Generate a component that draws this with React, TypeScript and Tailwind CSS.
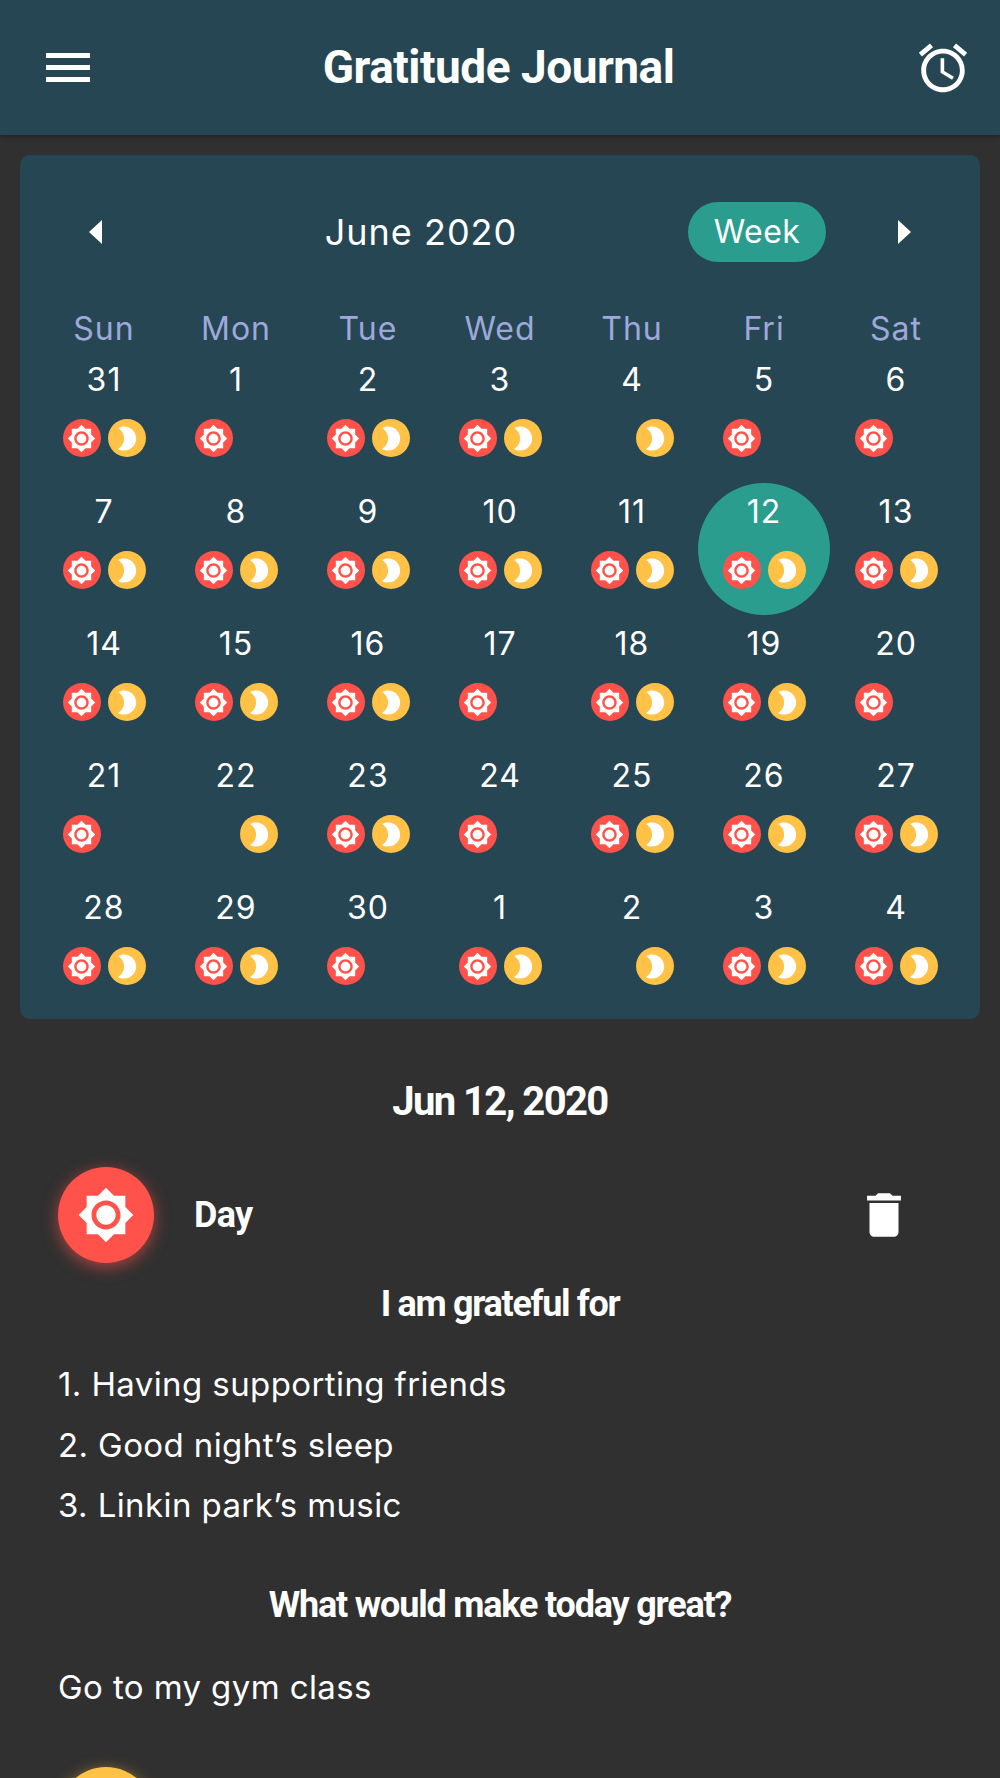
import React from 'react'

// ─── Icons ───────────────────────────────────────────────────

function SunIcon({ className }: { className: string }) {
  return (
    <svg viewBox="0 0 24 24" fill="#fff" className={className}>
      <path d="M20 8.69V4h-4.69L12 .69 8.69 4H4v4.69L.69 12 4 15.31V20h4.69L12 23.31 15.31 20H20v-4.69L23.31 12 20 8.69zM12 18c-3.31 0-6-2.69-6-6s2.69-6 6-6 6 2.69 6 6-2.69 6-6 6zm0-10c-2.21 0-4 1.79-4 4s1.79 4 4 4 4-1.79 4-4-1.79-4-4-4z" />
    </svg>
  )
}

function MoonIcon({ className }: { className: string }) {
  return (
    <svg viewBox="0 0 24 24" fill="#fff" className={className}>
      <path d="M10 2c-1.82 0-3.53.5-5 1.35C7.99 5.08 10 8.3 10 12s-2.01 6.92-5 8.65C6.47 21.5 8.18 22 10 22c5.52 0 10-4.48 10-10S15.52 2 10 2z" />
    </svg>
  )
}

function AlarmIcon() {
  return (
    <svg viewBox="0 0 24 24" fill="#fff" className="w-[58px] h-[58px]">
      <path d="M22 5.72l-4.6-3.86-1.29 1.53 4.6 3.86L22 5.72zM7.88 3.39L6.6 1.86 2 5.71l1.29 1.53 4.59-3.85zM12.5 8H11v6l4.75 2.85.75-1.23-4-2.37V8zM12 4c-4.97 0-9 4.03-9 9s4.02 9 9 9c4.97 0 9-4.03 9-9s-4.03-9-9-9zm0 16c-3.87 0-7-3.13-7-7s3.13-7 7-7 7 3.13 7 7-3.13 7-7 7z" />
    </svg>
  )
}

function TrashIcon() {
  return (
    <svg viewBox="0 0 24 24" fill="#fff" className="w-[58px] h-[58px]">
      <path d="M6 19c0 1.1.9 2 2 2h8c1.1 0 2-.9 2-2V7H6v12zM19 4h-3.5l-1-1h-5l-1 1H5v2h14V4z" />
    </svg>
  )
}

// ─── Calendar data ───────────────────────────────────────────

const WEEKDAYS = ['Sun', 'Mon', 'Tue', 'Wed', 'Thu', 'Fri', 'Sat']

// b = day + night, d = day only, n = night only
const DAYS: [string, 'b' | 'd' | 'n'][] = [
  ['31', 'b'], ['1', 'd'], ['2', 'b'], ['3', 'b'], ['4', 'n'], ['5', 'd'], ['6', 'd'],
  ['7', 'b'], ['8', 'b'], ['9', 'b'], ['10', 'b'], ['11', 'b'], ['12', 'b'], ['13', 'b'],
  ['14', 'b'], ['15', 'b'], ['16', 'b'], ['17', 'd'], ['18', 'b'], ['19', 'b'], ['20', 'd'],
  ['21', 'd'], ['22', 'n'], ['23', 'b'], ['24', 'd'], ['25', 'b'], ['26', 'b'], ['27', 'b'],
  ['28', 'b'], ['29', 'b'], ['30', 'd'], ['1', 'b'], ['2', 'n'], ['3', 'b'], ['4', 'b'],
]

function DayCell({ label, kind, selected }: { label: string; kind: 'b' | 'd' | 'n'; selected: boolean }) {
  return (
    <div className={`h-[132px] flex flex-col items-center pt-[7px] rounded-full ${selected ? 'bg-[#2a9d8f]' : ''}`}>
      <div className="text-[32px] leading-[44px] tracking-[1px] text-white">{label}</div>
      <div className="flex gap-[7px] mt-[17px]">
        <div className={`w-[38px] h-[38px] rounded-full flex items-center justify-center ${kind === 'n' ? '' : 'bg-[#ff524b]'}`}>
          {kind !== 'n' && <SunIcon className="w-[29px] h-[29px]" />}
        </div>
        <div className={`w-[38px] h-[38px] rounded-full flex items-center justify-center ${kind === 'd' ? '' : 'bg-[#ffc247]'}`}>
          {kind !== 'd' && <MoonIcon className="w-[29px] h-[29px]" />}
        </div>
      </div>
    </div>
  )
}

// ─── Main page ───────────────────────────────────────────────

export default function App() {
  return (
    <div className="h-[1778px] overflow-hidden bg-[#303030] text-white font-['Inter',sans-serif]">
      <header className="h-[135px] bg-[#264653] flex items-center justify-between pl-[46px] pr-[28px] shadow-[0_2px_4px_rgba(0,0,0,0.3)]">
        <div className="w-[44px] flex flex-col gap-[7px]">
          <div className="h-[5px] bg-white" />
          <div className="h-[5px] bg-white" />
          <div className="h-[5px] bg-white" />
        </div>
        <h1 className="mr-[7px] font-['Roboto',sans-serif] font-bold text-[46px] tracking-[-0.5px]">Gratitude Journal</h1>
        <AlarmIcon />
      </header>

      <section className="mx-[20px] mt-[20px] h-[864px] rounded-[10px] bg-[#264653] px-[18px] pt-[47px]">
        <div className="flex items-center h-[60px] pl-[51px]">
          <svg viewBox="0 0 13 24" className="w-[13px] h-[24px]" fill="#fff"><polygon points="13,0 0,12 13,24" /></svg>
          <div className="w-[200px] ml-[219px] text-center text-[36px] tracking-[1px]">June 2020</div>
          <div className="ml-[167px] w-[138px] h-[60px] rounded-full bg-[#2a9d8f] flex items-center justify-center text-[32px] tracking-[0.4px]">Week</div>
          <svg viewBox="0 0 13 24" className="ml-[72px] w-[13px] h-[24px]" fill="#fff"><polygon points="0,0 13,12 0,24" /></svg>
        </div>

        <div className="grid grid-cols-7 mt-[45px]">
          {WEEKDAYS.map(d => (
            <div key={d} className="text-center text-[32px] leading-[44px] tracking-[1px] text-[#9fa8da]">{d}</div>
          ))}
        </div>
        <div className="grid grid-cols-7">
          {DAYS.map(([label, kind], i) => (
            <DayCell key={i} label={label} kind={kind} selected={i === 12} />
          ))}
        </div>
      </section>

      <h2 className="mt-[58px] text-center font-['Roboto',sans-serif] font-bold text-[40px] tracking-[-1.6px] leading-[50px]">Jun 12, 2020</h2>

      <div className="mt-[40px] px-[58px] flex items-center">
        <div className="w-[96px] h-[96px] rounded-full bg-[#ff524b] flex items-center justify-center shadow-[0_4px_16px_rgba(255,82,75,0.6)]">
          <SunIcon className="w-[58px] h-[58px]" />
        </div>
        <div className="ml-[40px] font-['Roboto',sans-serif] font-bold text-[36px] tracking-[-0.7px]">Day</div>
        <div className="ml-auto mr-[29px]"><TrashIcon /></div>
      </div>

      <h3 className="mt-[17px] text-center font-['Roboto',sans-serif] font-bold text-[36px] tracking-[-1.3px] leading-[48px]">I am grateful for</h3>
      <ul className="mt-[26px] px-[58px] text-[33px] leading-[60.5px] tracking-[0.4px]">
        <li>1. Having supporting friends</li>
        <li>2. Good night’s sleep</li>
        <li>3. Linkin park’s music</li>
      </ul>

      <h3 className="mt-[45px] text-center font-['Roboto',sans-serif] font-bold text-[36px] tracking-[-1.2px] leading-[48px]">What would make today great?</h3>
      <p className="mt-[28px] px-[58px] text-[33px] leading-[60px] tracking-[0.4px]">Go to my gym class</p>

      <div className="mt-[50px] mx-[58px] w-[96px] h-[96px] rounded-full bg-[#ffc247] shadow-[0_4px_16px_rgba(255,194,71,0.6)]" />
    </div>
  )
}
